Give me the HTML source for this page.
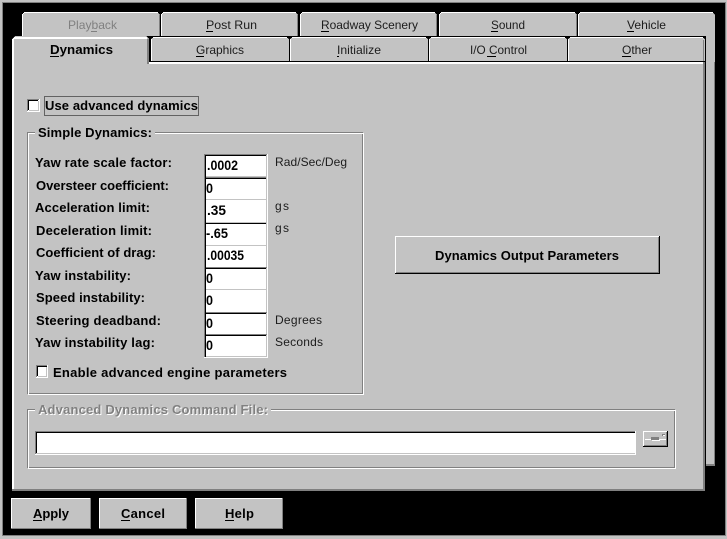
<!DOCTYPE html>
<html><head><meta charset="utf-8"><style>
html,body{margin:0;padding:0;background:#000;width:727px;height:539px;overflow:hidden}
svg{display:block}
text{font-family:"Liberation Sans",sans-serif;font-size:12px;fill:#000}
.b{font-weight:bold;font-size:13px}
.v{font-weight:bold;font-size:14px}
.r{fill:#1c1c1c}
.d{fill:#808080}
</style></head><body>
<svg width="727" height="539" viewBox="0 0 727 539" xmlns="http://www.w3.org/2000/svg">
<g shape-rendering="crispEdges">
<rect width="727" height="539" fill="#c3c3c3"/>
<rect x="2" y="2" width="724" height="534" fill="#808080"/>
<rect x="3" y="3" width="722" height="532" fill="#000"/>
<!-- back panel right piece -->
<rect x="706" y="36" width="9" height="430" fill="#c3c3c3"/>
<rect x="714" y="20" width="1" height="446" fill="#808080"/>
<rect x="706" y="464" width="9" height="2" fill="#808080"/>
<!-- back tabs -->
<path d="M22 36V15L25 12H157L160 15V36Z" fill="#c3c3c3"/>
<path d="M161 36V15L164 12H295L298 15V36Z" fill="#c3c3c3"/>
<path d="M300 36V15L303 12H434L437 15V36Z" fill="#c3c3c3"/>
<path d="M439 36V15L442 12H574L577 15V36Z" fill="#c3c3c3"/>
<path d="M578 62V15L581 12H712L715 15V62Z" fill="#c3c3c3"/>
<g fill="#fff">
<rect x="24" y="12" width="134" height="1"/><rect x="22" y="14" width="1" height="22"/><rect x="23" y="13" width="1" height="1"/>
<rect x="163" y="12" width="133" height="1"/><rect x="161" y="14" width="1" height="22"/><rect x="162" y="13" width="1" height="1"/>
<rect x="302" y="12" width="133" height="1"/><rect x="300" y="14" width="1" height="22"/><rect x="301" y="13" width="1" height="1"/>
<rect x="441" y="12" width="134" height="1"/><rect x="439" y="14" width="1" height="22"/><rect x="440" y="13" width="1" height="1"/>
<rect x="580" y="12" width="133" height="1"/><rect x="578" y="14" width="1" height="22"/><rect x="579" y="13" width="1" height="1"/>
</g>
<g fill="#808080">
<rect x="159" y="15" width="1" height="21"/><rect x="297" y="15" width="1" height="21"/><rect x="436" y="15" width="1" height="21"/><rect x="576" y="15" width="1" height="21"/>
</g>
<!-- front panel -->
<rect x="12" y="62" width="693" height="429" fill="#c3c3c3"/>
<rect x="12" y="62" width="2" height="428" fill="#fff"/>
<rect x="149" y="62" width="554" height="2" fill="#fff"/>
<rect x="703" y="62" width="2" height="429" fill="#808080"/>
<rect x="12" y="489" width="693" height="2" fill="#808080"/>
<!-- front tabs backing black -->
<rect x="12" y="36" width="694" height="26" fill="#000"/>
<path d="M12 64V39L15 36H146L149 39V64Z" fill="#c3c3c3"/>
<path d="M151 61V39L154 37H286L289 39V61Z" fill="#c3c3c3"/>
<path d="M290 61V39L293 37H425L428 39V61Z" fill="#c3c3c3"/>
<path d="M429 61V39L432 37H564L567 39V61Z" fill="#c3c3c3"/>
<path d="M568 61V39L571 37H702L705 39V61Z" fill="#c3c3c3"/>
<g fill="#fff">
<rect x="14" y="37" width="133" height="2"/><rect x="12" y="39" width="2" height="26"/><rect x="13" y="38" width="2" height="1"/>
<rect x="153" y="37" width="134" height="1"/><rect x="151" y="39" width="1" height="22"/>
<rect x="292" y="37" width="134" height="1"/><rect x="290" y="39" width="1" height="22"/>
<rect x="431" y="37" width="134" height="1"/><rect x="429" y="39" width="1" height="22"/>
<rect x="570" y="37" width="133" height="1"/><rect x="568" y="39" width="1" height="22"/>
</g>
<g fill="#808080">
<rect x="147" y="39" width="2" height="25"/><rect x="703" y="40" width="1" height="21"/>
</g>
<!-- focus rect -->
<rect x="44.5" y="96.5" width="154" height="19" fill="none" stroke="#000" stroke-dasharray="1 1"/>
<!-- checkbox top -->
<rect x="27" y="99" width="13" height="13" fill="#fff"/>
<rect x="27" y="99" width="12" height="1" fill="#808080"/><rect x="27" y="99" width="1" height="12" fill="#808080"/>
<rect x="28" y="100" width="10" height="1" fill="#000"/><rect x="28" y="100" width="1" height="10" fill="#000"/>
<rect x="38" y="101" width="1" height="9" fill="#c3c3c3"/><rect x="29" y="110" width="10" height="1" fill="#c3c3c3"/>
<!-- simple group -->
<rect x="27.5" y="132.5" width="335" height="261" fill="none" stroke="#808080"/>
<rect x="28.5" y="133.5" width="335" height="261" fill="none" stroke="#fff"/>
<rect x="35" y="126" width="120" height="14" fill="#c3c3c3"/>
<!-- adv group -->
<rect x="27.5" y="409.5" width="647" height="58" fill="none" stroke="#808080"/>
<rect x="28.5" y="410.5" width="647" height="58" fill="none" stroke="#fff"/>
<rect x="35" y="403" width="236" height="14" fill="#c3c3c3"/>
<!-- inputs -->
<g>
<rect x="204" y="154" width="64" height="204" fill="#fff"/>
<rect x="204" y="154" width="1" height="204" fill="#808080"/>
<rect x="205" y="155" width="1" height="202" fill="#000"/>
<rect x="266" y="154" width="1" height="203" fill="#c3c3c3"/>
<rect x="267" y="154" width="1" height="204" fill="#fff"/>
<rect x="204" y="154" width="63" height="1" fill="#808080"/><rect x="205" y="155" width="61" height="1" fill="#000"/>
<rect x="206" y="176" width="61" height="1" fill="#c3c3c3"/>
<rect x="205" y="178" width="61" height="1" fill="#000"/><rect x="206" y="177" width="60" height="1" fill="#808080"/>
<rect x="206" y="199" width="61" height="1" fill="#c3c3c3"/>
<rect x="206" y="222" width="61" height="1" fill="#c3c3c3"/>
<rect x="205" y="223" width="61" height="1" fill="#000"/>
<rect x="206" y="245" width="61" height="1" fill="#c3c3c3"/>
<rect x="206" y="267" width="61" height="1" fill="#808080"/>
<rect x="205" y="268" width="61" height="1" fill="#000"/>
<rect x="206" y="289" width="61" height="1" fill="#c3c3c3"/>
<rect x="206" y="312" width="61" height="1" fill="#808080"/>
<rect x="205" y="313" width="61" height="1" fill="#000"/>
<rect x="206" y="334" width="61" height="1" fill="#808080"/>
<rect x="205" y="335" width="61" height="1" fill="#000"/>
<rect x="206" y="356" width="61" height="1" fill="#c3c3c3"/>
<rect x="204" y="357" width="64" height="1" fill="#fff"/>
</g>
<!-- checkbox enable -->
<rect x="36" y="365" width="12" height="13" fill="#fff"/>
<rect x="36" y="365" width="11" height="1" fill="#808080"/><rect x="36" y="365" width="1" height="12" fill="#808080"/>
<rect x="37" y="366" width="10" height="1" fill="#000"/><rect x="37" y="366" width="1" height="10" fill="#000"/>
<rect x="46" y="367" width="1" height="10" fill="#c3c3c3"/><rect x="38" y="376" width="9" height="1" fill="#c3c3c3"/>
<!-- output button -->
<rect x="395" y="236" width="265" height="38" fill="#000"/>
<rect x="395" y="236" width="264" height="37" fill="#fff"/>
<rect x="396" y="237" width="263" height="36" fill="#808080"/>
<rect x="396" y="237" width="262" height="35" fill="#c3c3c3"/>
<!-- file input -->
<rect x="35" y="431" width="601" height="24" fill="#c3c3c3"/>
<rect x="35" y="431" width="600" height="23" fill="#808080"/>
<rect x="36" y="432" width="600" height="22" fill="#c3c3c3"/>
<rect x="36" y="432" width="599" height="21" fill="#000"/>
<rect x="37" y="433" width="598" height="20" fill="#fff"/>
<rect x="35" y="454" width="601" height="1" fill="#fff"/><rect x="635" y="431" width="1" height="24" fill="#fff"/>
<!-- browse -->
<rect x="643" y="431" width="25" height="16" fill="#000"/>
<rect x="643" y="431" width="24" height="15" fill="#fff"/>
<rect x="644" y="432" width="23" height="14" fill="#808080"/>
<rect x="644" y="432" width="22" height="13" fill="#c3c3c3"/>
<rect x="645" y="439" width="21" height="1" fill="#fff"/>
<rect x="651" y="437" width="8" height="3" fill="#808080"/>
<rect x="652" y="440" width="8" height="1" fill="#fff"/>
<rect x="662" y="434" width="3" height="2" fill="#808080"/><rect x="663" y="435" width="2" height="1" fill="#fff"/>
<!-- bottom buttons -->
<rect x="11" y="498" width="80" height="31" fill="#808080"/><rect x="11" y="498" width="79" height="30" fill="#fff"/><rect x="12" y="499" width="78" height="29" fill="#c3c3c3"/>
<rect x="99" y="498" width="88" height="31" fill="#808080"/><rect x="99" y="498" width="87" height="30" fill="#fff"/><rect x="100" y="499" width="86" height="29" fill="#c3c3c3"/>
<rect x="195" y="498" width="88" height="31" fill="#808080"/><rect x="195" y="498" width="87" height="30" fill="#fff"/><rect x="196" y="499" width="86" height="29" fill="#c3c3c3"/>
<!-- underlines -->
<g fill="#000">
<rect x="206" y="31" width="7" height="1"/><rect x="321" y="31" width="8" height="1"/><rect x="491" y="31" width="7" height="1"/><rect x="627" y="31" width="7" height="1"/>
<rect x="50" y="56" width="9" height="1"/>
<rect x="196" y="56" width="8" height="1"/><rect x="337" y="56" width="2" height="1"/><rect x="487" y="56" width="9" height="1"/><rect x="622" y="56" width="9" height="1"/>
<rect x="33" y="520" width="9" height="1"/><rect x="121" y="520" width="9" height="1"/><rect x="225" y="520" width="9" height="1"/>
</g>
<rect x="91" y="31" width="6" height="1" fill="#808080"/>
</g>
<!-- tab text -->
<text x="68" y="29" class="d" textLength="49" lengthAdjust="spacingAndGlyphs">Playback</text>
<text x="206" y="29" class="r" textLength="51" lengthAdjust="spacingAndGlyphs">Post Run</text>
<text x="321" y="29" class="r" textLength="97" lengthAdjust="spacingAndGlyphs">Roadway Scenery</text>
<text x="491" y="29" class="r" textLength="34" lengthAdjust="spacingAndGlyphs">Sound</text>
<text x="627" y="29" class="r" textLength="39" lengthAdjust="spacingAndGlyphs">Vehicle</text>
<text x="50" y="54" class="b" textLength="63" lengthAdjust="spacingAndGlyphs">Dynamics</text>
<text x="196" y="54" class="r" textLength="48" lengthAdjust="spacingAndGlyphs">Graphics</text>
<text x="337" y="54" class="r" textLength="44" lengthAdjust="spacingAndGlyphs">Initialize</text>
<text x="470" y="54" class="r" textLength="57" lengthAdjust="spacingAndGlyphs">I/O Control</text>
<text x="622" y="54" class="r" textLength="30" lengthAdjust="spacingAndGlyphs">Other</text>
<!-- labels -->
<text x="45" y="110" class="b" textLength="153">Use advanced dynamics</text>
<text x="38" y="137" class="b" textLength="114">Simple Dynamics:</text>
<text x="35" y="167" class="b" textLength="137">Yaw rate scale factor:</text>
<text x="36" y="190" class="b" textLength="133">Oversteer coefficient:</text>
<text x="35" y="212" class="b" textLength="115">Acceleration limit:</text>
<text x="36" y="235" class="b" textLength="116">Deceleration limit:</text>
<text x="36" y="257" class="b" textLength="120">Coefficient of drag:</text>
<text x="35" y="280" class="b" textLength="96">Yaw instability:</text>
<text x="36" y="302" class="b" textLength="109">Speed instability:</text>
<text x="36" y="325" class="b" textLength="125">Steering deadband:</text>
<text x="35" y="347" class="b" textLength="120">Yaw instability lag:</text>
<text x="53" y="377" class="b" textLength="234">Enable advanced engine parameters</text>
<!-- values -->
<text x="207" y="170" class="v" textLength="31" lengthAdjust="spacingAndGlyphs">.0002</text>
<text x="206" y="193" class="v" textLength="7" lengthAdjust="spacingAndGlyphs">0</text>
<text x="207" y="215" class="v" textLength="19" lengthAdjust="spacingAndGlyphs">.35</text>
<text x="206" y="238" class="v" textLength="22" lengthAdjust="spacingAndGlyphs">-.65</text>
<text x="207" y="260" class="v" textLength="37" lengthAdjust="spacingAndGlyphs">.00035</text>
<text x="206" y="283" class="v" textLength="7" lengthAdjust="spacingAndGlyphs">0</text>
<text x="206" y="305" class="v" textLength="7" lengthAdjust="spacingAndGlyphs">0</text>
<text x="206" y="328" class="v" textLength="7" lengthAdjust="spacingAndGlyphs">0</text>
<text x="206" y="350" class="v" textLength="7" lengthAdjust="spacingAndGlyphs">0</text>
<!-- units -->
<text x="275" y="166" class="r" textLength="72">Rad/Sec/Deg</text>
<text x="275" y="210" class="r" textLength="14">gs</text>
<text x="275" y="232" class="r" textLength="14">gs</text>
<text x="275" y="324" class="r" textLength="47">Degrees</text>
<text x="275" y="346" class="r" textLength="48">Seconds</text>
<!-- button text -->
<text x="435" y="260" class="b" textLength="184">Dynamics Output Parameters</text>
<text x="39" y="415" class="b" style="fill:#fff" textLength="230">Advanced Dynamics Command File:</text>
<text x="38" y="414" class="b d" textLength="230">Advanced Dynamics Command File:</text>
<text x="33" y="518" class="b" textLength="36">Apply</text>
<text x="121" y="518" class="b" textLength="44">Cancel</text>
<text x="225" y="518" class="b" textLength="29">Help</text>
</svg>
</body></html>
